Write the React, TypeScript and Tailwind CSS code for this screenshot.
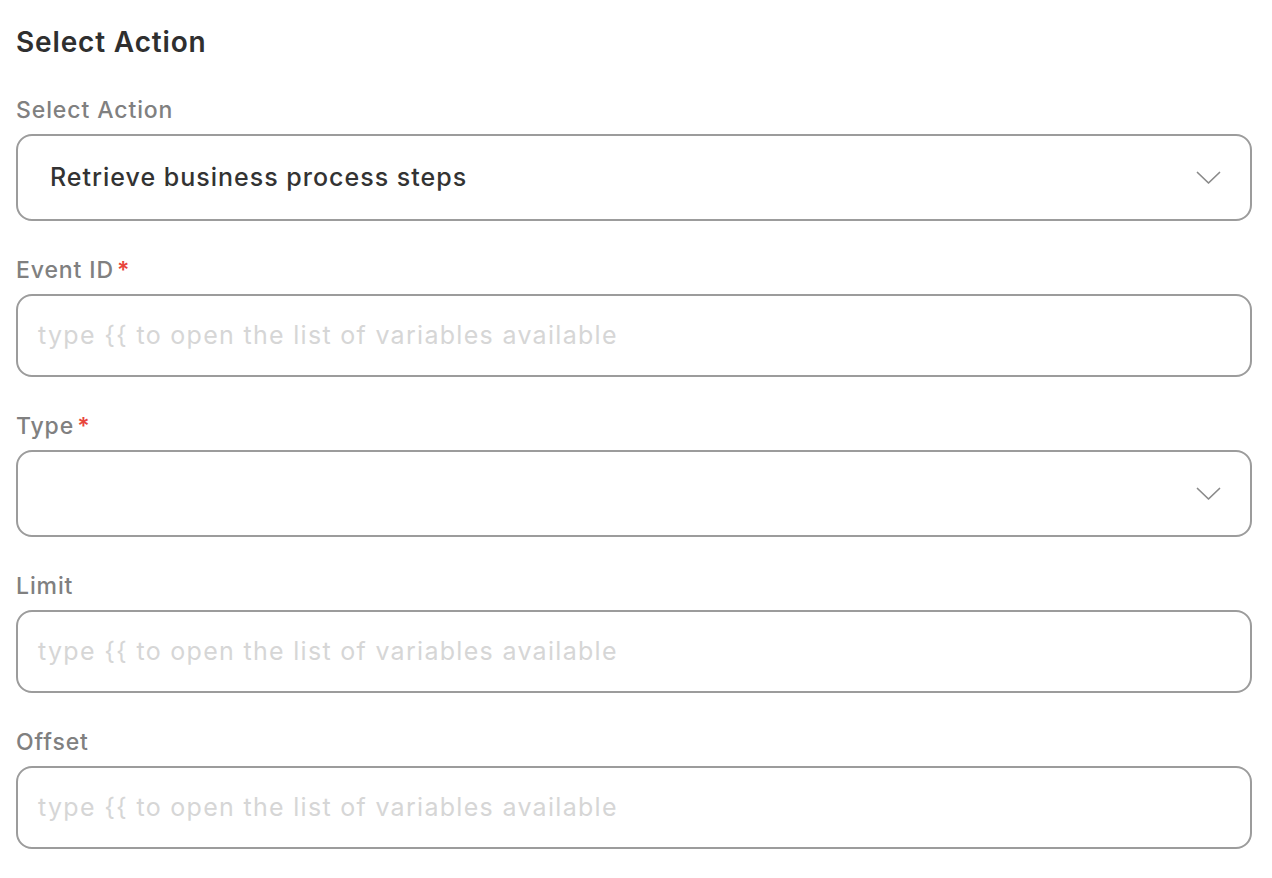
import React from "react";

const font = { fontFamily: "Inter, 'Noto Sans', sans-serif" };

function Chevron() {
  return (
    <svg width="25" height="14" viewBox="0 0 25 14" fill="none" className="shrink-0">
      <polyline points="1.5,1.5 12.5,12 23.5,1.5" stroke="#8a8a8a" strokeWidth="1.7" strokeLinecap="round" strokeLinejoin="round" />
    </svg>
  );
}

function Label({ text, required }: { text: string; required?: boolean }) {
  return (
    <div className="text-[23px] leading-[30px] font-medium tracking-[0.9px] text-[#808080] flex items-start">
      <span>{text}</span>
      {required && <span className="text-[#e8453c] ml-[3px] font-semibold">*</span>}
    </div>
  );
}

function SelectBox({ value }: { value?: string }) {
  return (
    <div className="mt-[9px] h-[87px] rounded-[16px] border-2 border-[#9c9c9c] flex items-center pl-[32px] pr-[29px] bg-white">
      <span className="flex-1 text-[25px] font-medium tracking-[1px] text-[#333333]">{value ?? ""}</span>
      <Chevron />
    </div>
  );
}

function InputBox() {
  return (
    <div className="mt-[9px] h-[83px] rounded-[16px] border-2 border-[#9c9c9c] flex items-center pl-[20px] bg-white">
      <span className="text-[25px] tracking-[1.3px] text-[#d6d6d6]">type {"{{"} to open the list of variables available</span>
    </div>
  );
}

export default function App() {
  return (
    <div className="min-h-[878px] bg-white pt-[24px] pl-[16px] w-[1252px]" style={font}>
      <h2 className="text-[28px] leading-[36px] font-semibold tracking-[0.85px] text-[#2f2f2f] m-0">Select Action</h2>
      <div className="mt-[35px] flex flex-col gap-[34px]">
        <div>
          <Label text="Select Action" />
          <SelectBox value="Retrieve business process steps" />
        </div>
        <div>
          <Label text="Event ID" required />
          <InputBox />
        </div>
        <div>
          <Label text="Type" required />
          <SelectBox />
        </div>
        <div>
          <Label text="Limit" />
          <InputBox />
        </div>
        <div>
          <Label text="Offset" />
          <InputBox />
        </div>
      </div>
    </div>
  );
}
